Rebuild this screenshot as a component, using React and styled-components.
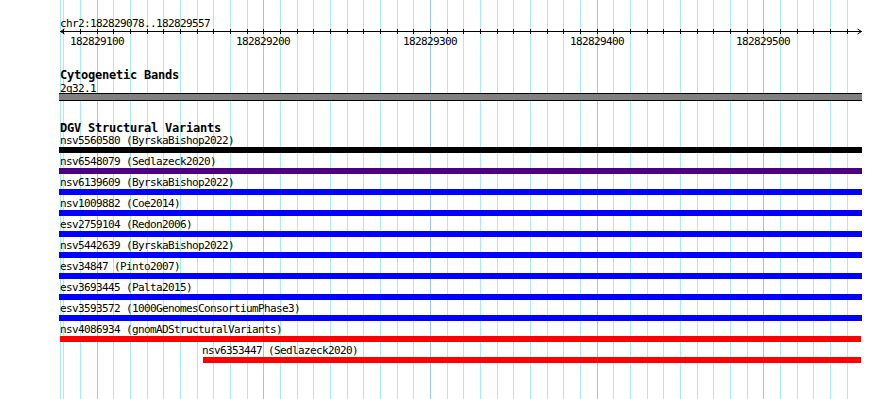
import React from 'react';
import styled, { createGlobalStyle } from 'styled-components';

const GlobalStyle = createGlobalStyle`
  html, body { margin: 0; padding: 0; background: #fefffe; }
  body { width: 890px; height: 399px; overflow: hidden; }
`;

const START = 182829078;
const X0 = 60;
const SCALE = 800 / 480;
const PANEL_LEFT = 59;
const toX = (bp) => Math.round(X0 + (bp - START) * SCALE);
const lx = (x) => x - PANEL_LEFT;

const gridLines = [];
for (let bp = 182829080; bp <= 182829550; bp += 10) {
  gridLines.push({ bp, x: toX(bp), major: bp % 100 === 0 });
}
const majors = gridLines.filter((g) => g.major);

const MINOR = '#a9ecef';
const MAJOR = '#95c9e6';

const Page = styled.div`
  position: relative;
  width: 890px;
  height: 399px;
  overflow: hidden;
  background: #fefffe;
  font-family: "DejaVu Sans Mono", "Liberation Mono", monospace;
`;

const GridLayer = styled.svg`
  position: absolute;
  left: 0;
  top: 0;
  z-index: 0;
  pointer-events: none;
`;

const Panel = styled.div`
  position: relative;
  z-index: 1;
  display: flex;
  flex-direction: column;
  width: 803px;
  padding: 17px 0 0 ${PANEL_LEFT}px;
`;

const Label = styled.div`
  font-family: "DejaVu Sans Mono", "Liberation Mono", monospace;
  font-size: 11px;
  line-height: 13px;
  letter-spacing: -0.622px;
  height: ${(p) => p.$h ?? 13}px;
  padding-left: ${(p) => p.$indent ?? 1}px;
  color: #000;
  white-space: nowrap;
`;

const Title = styled.div`
  font-family: "DejaVu Sans Mono", "Liberation Mono", monospace;
  font-weight: bold;
  font-size: 12px;
  line-height: 14px;
  letter-spacing: -0.225px;
  height: ${(p) => p.$h ?? 14}px;
  padding-left: 1px;
  color: #000;
  white-space: nowrap;
`;

const RulerSvg = styled.svg`
  display: block;
  overflow: visible;
`;

const Section = styled.section`
  display: flex;
  flex-direction: column;
  margin-top: 20px;
`;

const BandBar = styled.div`
  box-sizing: border-box;
  width: 803px;
  height: 8px;
  background: #808080;
  border-top: 1px solid #000;
  border-bottom: 1px solid #000;
`;

const Rows = styled.div`
  display: flex;
  flex-direction: column;
  gap: 2px;
`;

const Row = styled.div`
  display: flex;
  flex-direction: column;
`;

const Bar = styled.div`
  height: 6px;
  background: ${(p) => p.$color};
  margin-left: ${(p) => p.$left}px;
  width: ${(p) => p.$width}px;
`;

const BLUE = '#0000ff';
const RED = '#ff0000';

const variants = [
  { label: 'nsv5560580 (ByrskaBishop2022)', color: '#000000', from: 59, to: 862 },
  { label: 'nsv6548079 (Sedlazeck2020)', color: '#4b0082', from: 59, to: 862 },
  { label: 'nsv6139609 (ByrskaBishop2022)', color: BLUE, from: 59, to: 862 },
  { label: 'nsv1009882 (Coe2014)', color: BLUE, from: 59, to: 862 },
  { label: 'esv2759104 (Redon2006)', color: BLUE, from: 59, to: 862 },
  { label: 'nsv5442639 (ByrskaBishop2022)', color: BLUE, from: 59, to: 862 },
  { label: 'esv34847 (Pinto2007)', color: BLUE, from: 59, to: 862 },
  { label: 'esv3693445 (Palta2015)', color: BLUE, from: 59, to: 862 },
  { label: 'esv3593572 (1000GenomesConsortiumPhase3)', color: BLUE, from: 59, to: 862 },
  { label: 'nsv4086934 (gnomADStructuralVariants)', color: RED, from: 60, to: 861 },
  { label: 'nsv6353447 (Sedlazeck2020)', color: RED, from: 203, to: 861 },
];

function Grid() {
  return (
    <GridLayer width="890" height="399" shapeRendering="crispEdges">
      <rect x={60} y={0} width={1} height={399} fill={MINOR} />
      {gridLines.map((g) => (
        <rect key={g.bp} x={g.x} y={0} width={1} height={399} fill={g.major ? MAJOR : MINOR} />
      ))}
    </GridLayer>
  );
}

function Ruler() {
  return (
    <RulerSvg width="803" height="20" shapeRendering="crispEdges">
      <rect x={lx(60)} y={3} width={802} height={1} fill="#000" />
      <polyline
        points={`${lx(64) + 0.5},1 ${lx(60) + 0.5},3.5 ${lx(64) + 0.5},6`}
        fill="none"
        stroke="#000"
        strokeWidth="1"
        shapeRendering="auto"
      />
      <polyline
        points={`${lx(857) + 0.5},1 ${lx(861) + 0.5},3.5 ${lx(857) + 0.5},6`}
        fill="none"
        stroke="#000"
        strokeWidth="1"
        shapeRendering="auto"
      />
      {gridLines.map((g) => (
        <rect key={g.bp} x={lx(g.x)} y={1} width={1} height={5} fill="#000" />
      ))}
      {majors.map((g) => (
        <text
          key={g.bp}
          x={lx(g.x) - 27}
          y={17}
          fill="#000"
          fontFamily='"DejaVu Sans Mono", "Liberation Mono", monospace'
          fontSize="11"
          letterSpacing="-0.622"
        >
          {g.bp}
        </text>
      ))}
    </RulerSvg>
  );
}

export default function App() {
  return (
    <Page>
      <GlobalStyle />
      <Grid />
      <Panel>
        <Label $h={11}>chr2:182829078..182829557</Label>
        <Ruler />
        <Section>
          <Title $h={14}>Cytogenetic Bands</Title>
          <Label $h={11}>2q32.1</Label>
          <BandBar />
        </Section>
        <Section>
          <Title $h={13}>DGV Structural Variants</Title>
          <Rows>
            {variants.map((v) => (
              <Row key={v.label}>
                <Label $indent={v.from - PANEL_LEFT + (v.from > 100 ? -1 : 1) - (v.from === 60 ? 1 : 0)}>
                  {v.label}
                </Label>
                <Bar $color={v.color} $left={v.from - PANEL_LEFT} $width={v.to - v.from} />
              </Row>
            ))}
          </Rows>
        </Section>
      </Panel>
    </Page>
  );
}
